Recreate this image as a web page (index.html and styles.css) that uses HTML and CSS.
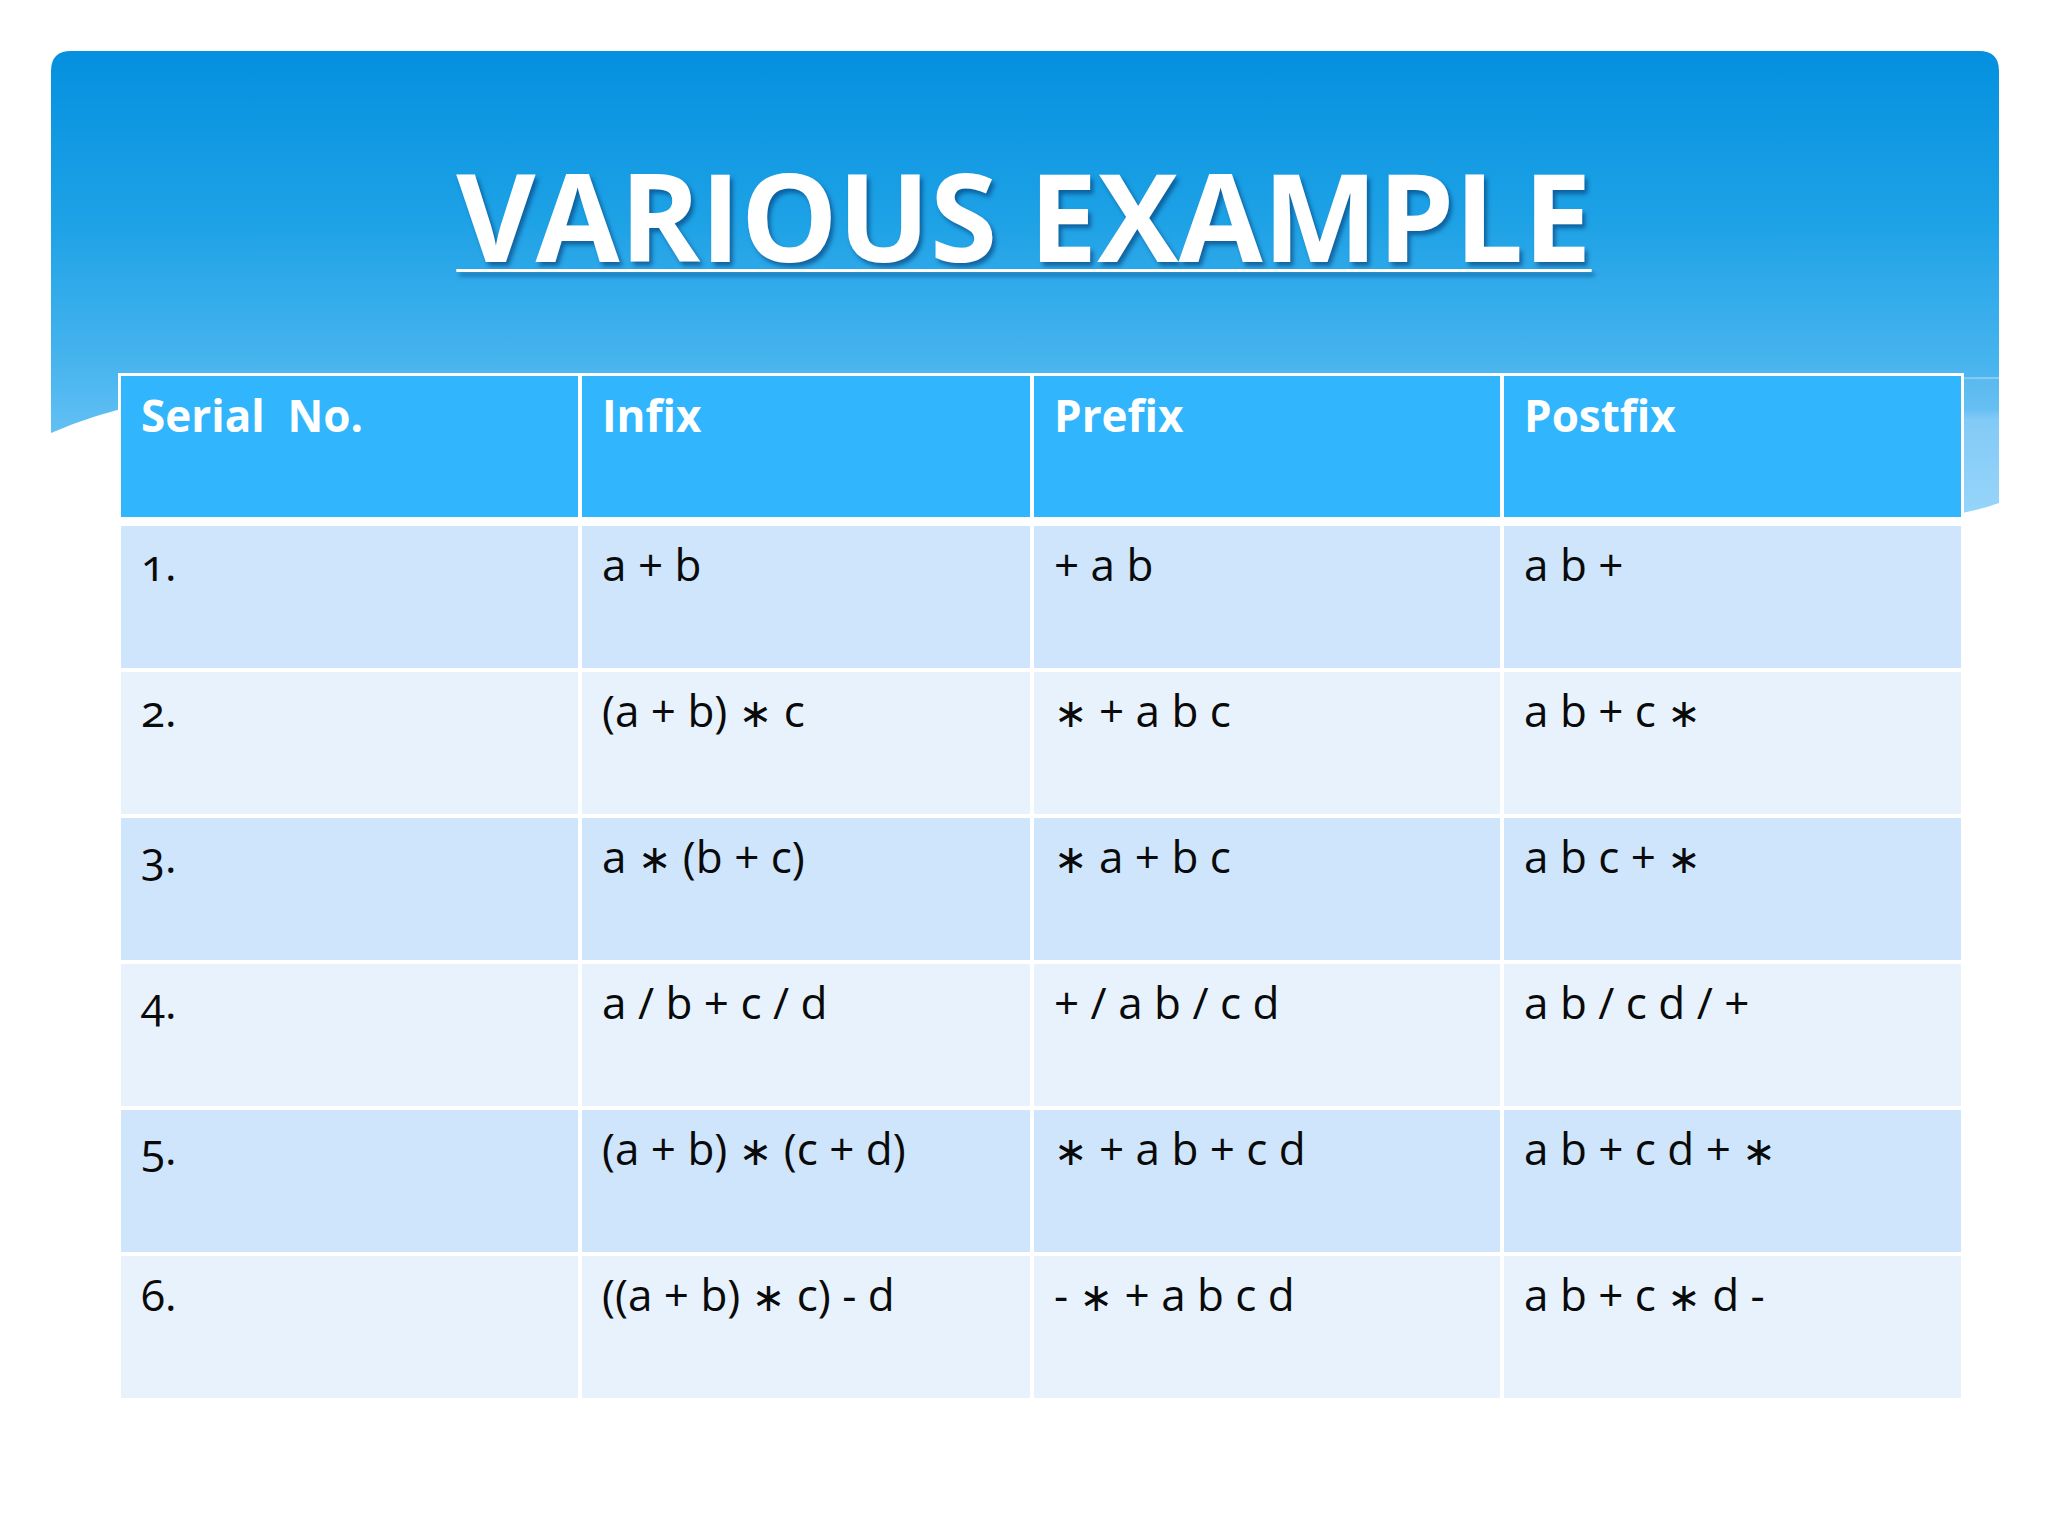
FILE: index.html
```html
<!DOCTYPE html>
<html lang="en">
<head>
<meta charset="utf-8">
<title>Various Example</title>
<link rel="stylesheet" href="styles.css">
</head>
<body>
<div class="slide">
  <svg class="backdrop" width="2048" height="1536" viewBox="0 0 2048 1536" aria-hidden="true">
    <defs>
      <linearGradient id="sky" x1="0" y1="51" x2="0" y2="433" gradientUnits="userSpaceOnUse">
        <stop offset="0" stop-color="#0490df"/>
        <stop offset="0.45" stop-color="#1ea2e6"/>
        <stop offset="0.8" stop-color="#45b3ee"/>
        <stop offset="1" stop-color="#62c0f3"/>
      </linearGradient>
      <linearGradient id="wave2" x1="0" y1="379" x2="0" y2="515" gradientUnits="userSpaceOnUse">
        <stop offset="0" stop-color="#5ab9ef"/>
        <stop offset="0.22" stop-color="#66bff2"/>
        <stop offset="0.3" stop-color="#82caf6"/>
        <stop offset="1" stop-color="#97d5fa"/>
      </linearGradient>
    </defs>
    <path d="M51,71 Q51,51 71,51 L1979,51 Q1999,51 1999,71 L1999,379 C1500,382 700,384 300,385 Q150,390 51,433 Z" fill="url(#sky)"/>
    <path d="M1300,382 L1999,378 L1999,503 C1900,540 1600,530 1300,500 Z" fill="url(#wave2)"/>
    <path d="M1300,382 L1999,378" stroke="#86cdf7" stroke-width="2" fill="none"/>
  </svg>

  <div class="content">
    <h1 class="title">VARIOUS EXAMPLE</h1>

    <div class="table">
      <div class="cell head">Serial&nbsp; No.</div>
      <div class="cell head">Infix</div>
      <div class="cell head">Prefix</div>
      <div class="cell head">Postfix</div>

      <div class="cell odd num">1.</div>
      <div class="cell odd">a + b</div>
      <div class="cell odd">+ a b</div>
      <div class="cell odd">a b +</div>

      <div class="cell even num">2.</div>
      <div class="cell even">(a + b) <span class="op">∗</span> c</div>
      <div class="cell even"><span class="op">∗</span> + a b c</div>
      <div class="cell even">a b + c <span class="op">∗</span></div>

      <div class="cell odd num">3.</div>
      <div class="cell odd">a <span class="op">∗</span> (b + c)</div>
      <div class="cell odd"><span class="op">∗</span> a + b c</div>
      <div class="cell odd">a b c + <span class="op">∗</span></div>

      <div class="cell even num">4.</div>
      <div class="cell even">a / b + c / d</div>
      <div class="cell even">+ / a b / c d</div>
      <div class="cell even">a b / c d / +</div>

      <div class="cell odd num">5.</div>
      <div class="cell odd">(a + b) <span class="op">∗</span> (c + d)</div>
      <div class="cell odd"><span class="op">∗</span> + a b + c d</div>
      <div class="cell odd">a b + c d + <span class="op">∗</span></div>

      <div class="cell even num">6.</div>
      <div class="cell even">((a + b) <span class="op">∗</span> c) - d</div>
      <div class="cell even">- <span class="op">∗</span> + a b c d</div>
      <div class="cell even">a b + c <span class="op">∗</span> d -</div>
    </div>
  </div>
</div>
</body>
</html>
```

FILE: styles.css
```css
html, body {
  margin: 0;
  padding: 0;
  background: #ffffff;
}

.slide {
  position: relative;
  width: 2048px;
  height: 1536px;
  overflow: hidden;
  background: #ffffff;
  font-family: "Open Sans", "DejaVu Sans", sans-serif;
}

.backdrop {
  position: absolute;
  left: 0;
  top: 0;
  z-index: 0;
}

.content {
  position: relative;
  z-index: 1;
  display: flex;
  flex-direction: column;
  padding-top: 130px;
}

.title {
  margin: 0;
  text-align: center;
  font-family: "Open Sans", "DejaVu Sans", sans-serif;
  font-weight: 700;
  font-size: 122px;
  line-height: 170px;
  color: #ffffff;
  text-decoration: underline;
  text-decoration-thickness: 3px;
  text-underline-offset: 7px;
  text-shadow: 3px 4px 4px rgba(0, 45, 100, 0.55);
}

.table {
  margin-top: 73px;
  margin-left: 118px;
  width: 1846px;
  box-sizing: border-box;
  display: grid;
  grid-template-columns: 457px 448px 466px 457px;
  grid-template-rows: 146px repeat(6, 142px);
  column-gap: 4px;
  row-gap: 4px;
  padding: 3px 3px 0 3px;
  background: #ffffff;
}

.cell {
  box-sizing: border-box;
  padding: 8px 19px 0 20px;
  font-size: 44px;
  line-height: normal;
  color: #0a0a0a;
  white-space: nowrap;
}

.head {
  height: 141px;
  align-self: start;
  background: #31b5fd;
  color: #ffffff;
  font-weight: 700;
  padding-top: 9px;
}

.odd {
  background: #cee5fc;
}

.even {
  background: #e7f2fd;
}

.num {
  font-variant-numeric: oldstyle-nums;
}

.op {
  font-family: "Liberation Sans", "DejaVu Sans", sans-serif;
  font-size: 40px;
}
```
